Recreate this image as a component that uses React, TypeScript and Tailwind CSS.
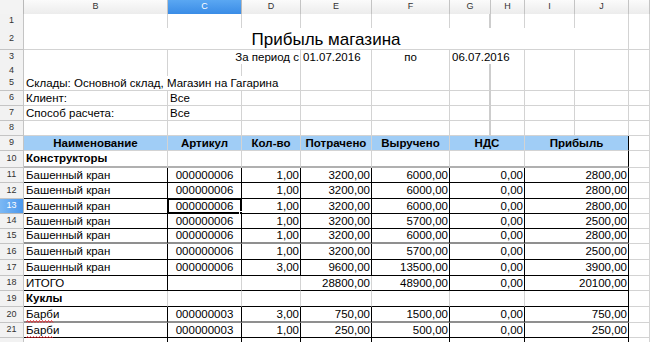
import React from "react"

type Edge = "k" | "g" | "gg" | "pb"
type Cell = {
  t?: React.ReactNode
  s?: 1 | 2 | 3 | 9
  a?: "l" | "c" | "r"
  r?: Edge
  b?: Edge
  bold?: boolean
  blue?: boolean
  sel?: boolean
  big?: boolean
}
type Row = { n: number; h: string; cells: Cell[]; hl?: boolean; hideNum?: boolean }

const COLS =
  "grid grid-cols-[24px_144px_74px_59px_71px_78px_41px_34px_50px_54px_1fr]"

const RIGHT: Record<Edge, string> = {
  k: "border-r border-r-black",
  g: "border-r border-r-[#d3d3d3]",
  gg: "border-r-2 border-r-[#cdcdcd]",
  pb: "border-r-2 border-r-[#b4b4b4]",
}
const BOTTOM: Record<Edge, string> = {
  k: "border-b border-b-black",
  g: "border-b border-b-[#d3d3d3]",
  gg: "border-b-2 border-b-[#b0b0b0]",
  pb: "border-b-2 border-b-[#8f8f8f]",
}
const ALIGN = {
  l: "justify-start pl-[2px]",
  c: "justify-center",
  r: "justify-end pr-[1px]",
}
const SPAN = { 1: "", 2: "col-span-2", 3: "col-span-3", 9: "col-span-9" }

const blank = (r: Edge = "g", b: Edge = "g"): Cell => ({ r, b })

// plain row: B..J + K, G gets the page-break line
const plain = (): Cell[] => [
  blank(),
  blank(),
  blank(),
  blank(),
  blank(),
  blank("gg"),
  blank(),
  blank(),
  blank(),
  blank(),
]

// spell-check squiggle under the word
const Barbie = () => (
  <span className="relative inline-block">
    Барби
    <svg
      className="absolute left-0 -bottom-[3px]"
      width="28"
      height="3"
      viewBox="0 0 28 3"
    >
      <path
        d="M0 2.5 L1.5 0.5 L3 2.5 L4.5 0.5 L6 2.5 L7.5 0.5 L9 2.5 L10.5 0.5 L12 2.5 L13.5 0.5 L15 2.5 L16.5 0.5 L18 2.5 L19.5 0.5 L21 2.5 L22.5 0.5 L24 2.5 L25.5 0.5 L27 2.5"
        fill="none"
        stroke="#e8262b"
        strokeWidth="0.9"
      />
    </svg>
  </span>
)

const item = (
  name: React.ReactNode,
  art: string,
  qty: string,
  spent: string,
  rev: string,
  vat: string,
  profit: string,
  b: Edge = "k",
  sel = false
): Cell[] => [
  { t: name, a: "l", r: "k", b },
  { t: art, a: "c", r: "k", b, sel },
  { t: qty, a: "r", r: "k", b },
  { t: spent, a: "r", r: "k", b },
  { t: rev, a: "r", r: "k", b },
  { t: vat, a: "r", r: "k", b, s: 2 },
  { t: profit, a: "r", r: "k", b, s: 2 },
  blank(),
]

const group = (name: string, b: Edge): Cell[] => [
  { t: name, a: "l", bold: true, r: "g", b },
  blank("g", b),
  blank("g", b),
  blank("g", b),
  blank("g", b),
  { s: 2, r: "g", b },
  { s: 2, r: "k", b },
  blank(),
]

const ROWS: Row[] = [
  { n: 1, h: "h-[14px]", cells: plain() },
  {
    n: 2,
    h: "h-[22px]",
    cells: [{ t: "Прибыль магазина", s: 9, a: "c", big: true, r: "g", b: "g" }, blank()],
  },
  {
    n: 3,
    h: "h-[14px]",
    cells: [
      blank(),
      { t: "За период с", s: 2, a: "r", r: "g", b: "g" },
      { t: "01.07.2016", a: "l", r: "g", b: "g" },
      { t: "по", a: "c", r: "g", b: "g" },
      { t: "06.07.2016", s: 2, a: "l", r: "g", b: "g" },
      blank(),
      blank(),
      blank(),
    ],
  },
  { n: 4, h: "h-[12px]", cells: plain() },
  {
    n: 5,
    h: "h-[15px]",
    cells: [
      { t: "Склады: Основной склад, Магазин на Гагарина", s: 3, a: "l", r: "g", b: "g" },
      blank(),
      blank(),
      blank("gg"),
      blank(),
      blank(),
      blank(),
      blank(),
    ],
  },
  {
    n: 6,
    h: "h-[15px]",
    cells: [
      { t: "Клиент:", a: "l", r: "g", b: "g" },
      { t: "Все", a: "l", r: "g", b: "g" },
      ...plain().slice(2),
    ],
  },
  {
    n: 7,
    h: "h-[15px]",
    cells: [
      { t: "Способ расчета:", a: "l", r: "g", b: "g" },
      { t: "Все", a: "l", r: "g", b: "g" },
      ...plain().slice(2),
    ],
  },
  { n: 8, h: "h-[15px]", cells: plain() },
  {
    n: 9,
    h: "h-[15px]",
    cells: [
      { t: "Наименование", a: "c", bold: true, blue: true, r: "g", b: "g" },
      { t: "Артикул", a: "c", bold: true, blue: true, r: "g", b: "g" },
      { t: "Кол-во", a: "c", bold: true, blue: true, r: "g", b: "g" },
      { t: "Потрачено", a: "c", bold: true, blue: true, r: "g", b: "g" },
      { t: "Выручено", a: "c", bold: true, blue: true, r: "g", b: "g" },
      { t: "НДС", s: 2, a: "c", bold: true, blue: true, r: "g", b: "g" },
      { t: "Прибыль", s: 2, a: "c", bold: true, blue: true, r: "k", b: "g" },
      blank(),
    ],
  },
  { n: 10, h: "h-[17px]", cells: group("Конструкторы", "gg") },
  { n: 11, h: "h-[15px]", cells: item("Башенный кран", "000000006", "1,00", "3200,00", "6000,00", "0,00", "2800,00") },
  { n: 12, h: "h-[16px]", cells: item("Башенный кран", "000000006", "1,00", "3200,00", "6000,00", "0,00", "2800,00") },
  {
    n: 13,
    h: "h-[15px]",
    hl: true,
    cells: item("Башенный кран", "000000006", "1,00", "3200,00", "6000,00", "0,00", "2800,00", "k", true),
  },
  { n: 14, h: "h-[15px]", cells: item("Башенный кран", "000000006", "1,00", "3200,00", "5700,00", "0,00", "2500,00") },
  { n: 15, h: "h-[15px]", cells: item("Башенный кран", "000000006", "1,00", "3200,00", "6000,00", "0,00", "2800,00", "pb") },
  { n: 16, h: "h-[16px]", cells: item("Башенный кран", "000000006", "1,00", "3200,00", "5700,00", "0,00", "2500,00") },
  { n: 17, h: "h-[16px]", cells: item("Башенный кран", "000000006", "3,00", "9600,00", "13500,00", "0,00", "3900,00") },
  {
    n: 18,
    h: "h-[15px]",
    cells: [
      { t: "ИТОГО", a: "l", r: "k", b: "k" },
      blank("g", "k"),
      blank("g", "k"),
      { t: "28800,00", a: "r", r: "g", b: "k" },
      { t: "48900,00", a: "r", r: "k", b: "k" },
      { t: "0,00", s: 2, a: "r", r: "k", b: "k" },
      { t: "20100,00", s: 2, a: "r", r: "k", b: "k" },
      blank(),
    ],
  },
  { n: 19, h: "h-[16px]", cells: group("Куклы", "k") },
  { n: 20, h: "h-[16px]", cells: item(<Barbie />, "000000003", "3,00", "750,00", "1500,00", "0,00", "750,00", "pb") },
  { n: 21, h: "h-[15px]", cells: item(<Barbie />, "000000003", "1,00", "250,00", "500,00", "0,00", "250,00") },
  { n: 22, h: "h-[15px]", hideNum: true, cells: item("", "", "", "", "", "", "") },
]

const LETTERS = ["B", "C", "D", "E", "F", "G", "H", "I", "J", ""]

function SheetCell({ c }: { c: Cell }) {
  return (
    <div
      className={[
        "relative flex items-center min-w-0 whitespace-nowrap overflow-visible leading-none",
        SPAN[c.s ?? 1],
        ALIGN[c.a ?? "l"],
        RIGHT[c.r ?? "g"],
        BOTTOM[c.b ?? "g"],
        c.blue ? "bg-[#a0cdf6]" : "bg-white",
        c.bold ? "font-bold" : "",
        c.big ? "text-[17px] pt-[2px]" : "text-[11.5px] pt-[1px]",
      ].join(" ")}
    >
      {c.t}
      {c.sel && (
        <span className="absolute -left-px -top-px -right-px -bottom-px border-2 border-black">
          <span className="absolute -right-[4px] -bottom-[4px] w-[5px] h-[5px] bg-black border border-white" />
        </span>
      )}
    </div>
  )
}

export default function App() {
  return (
    <div
      className="w-[650px] h-[342px] overflow-hidden bg-white text-black"
      style={{ fontFamily: '"Liberation Sans", Arial, sans-serif' }}
    >
      {/* column letters */}
      <div className={COLS + " h-[14px]"}>
        <div className="bg-[#f3f3f3] border-r border-b border-[#b9b9b9]" />
        {LETTERS.map((l, i) => (
          <div
            key={i}
            className={
              l === "C"
                ? "flex items-center justify-center text-[9px] text-white bg-gradient-to-b from-[#5aa7f2] to-[#3a8ce6] border-r border-b border-[#b9b9b9]"
                : "flex items-center justify-center text-[9px] text-[#333] bg-gradient-to-b from-[#fbfbfb] to-[#ececec] border-r border-b border-[#c4c4c4]"
            }
          >
            {l}
          </div>
        ))}
      </div>

      {ROWS.map((row) => (
        <div key={row.n} className={COLS + " " + row.h}>
          <div
            className={
              row.hl
                ? "flex items-center justify-center text-[9px] text-white bg-gradient-to-r from-[#7bb8f4] to-[#4a97ec] border-r border-b border-[#b9b9b9]"
                : "flex items-center justify-center text-[9px] text-[#333] bg-[#f2f2f2] border-r border-b border-[#c4c4c4]"
            }
          >
            {row.hideNum ? "" : row.n}
          </div>
          {row.cells.map((c, i) => (
            <SheetCell key={i} c={c} />
          ))}
        </div>
      ))}
    </div>
  )
}
